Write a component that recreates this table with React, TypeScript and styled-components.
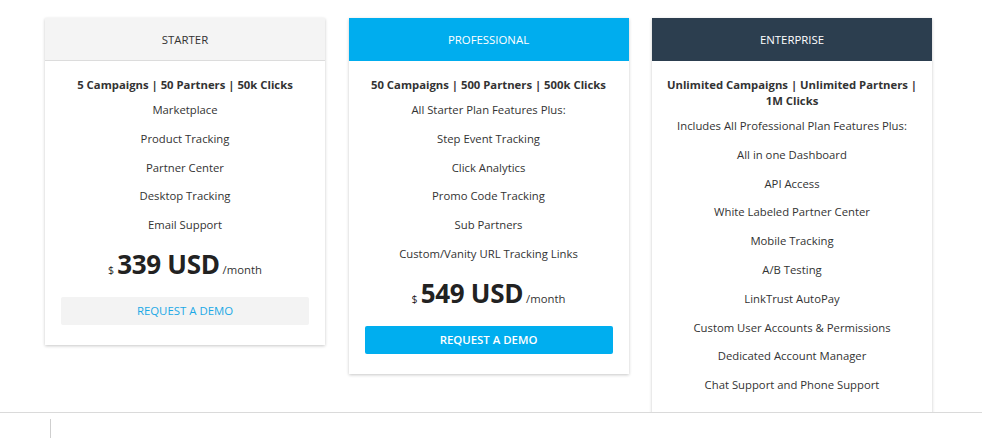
import React from "react";
import styled, { createGlobalStyle } from "styled-components";

const Global = createGlobalStyle`
  html, body { margin: 0; padding: 0; background: #fff; }
  body { font-family: "Open Sans", "Liberation Sans", sans-serif; color: #333; }
  * { box-sizing: border-box; }
`;

const Page = styled.div`
  display: flex;
  align-items: flex-start;
  gap: 23.5px;
  padding: 18px 0 0 45px;
  height: 438px;
  overflow: hidden;
`;

const Card = styled.div`
  width: 280px;
  background: #fff;
  box-shadow: 0 1px 3px rgba(0, 0, 0, 0.22);
  display: flex;
  flex-direction: column;
`;

const Header = styled.div<{ $bg: string; $fg: string; $line?: boolean }>`
  height: 43px;
  display: flex;
  align-items: center;
  justify-content: center;
  background: ${(p) => p.$bg};
  color: ${(p) => p.$fg};
  font-size: 11.4px;
  text-transform: uppercase;
  border-bottom: 1px solid ${(p) => (p.$line ? "#dcdcdc" : p.$bg)};
`;

const Body = styled.div<{ $tall?: boolean }>`
  padding: 16px 16px ${(p) => (p.$tall ? "40px" : "20px")};
  display: flex;
  flex-direction: column;
  align-items: center;
  text-align: center;
`;

const Limits = styled.div`
  font-size: 11.3px;
  font-weight: 700;
  line-height: 16px;
  color: #333;
  margin: 0 -6px 3px;
`;

const Feature = styled.div`
  font-size: 11.3px;
  line-height: 16.8px;
  padding: 6px 0;
  color: #333;
`;

const Price = styled.div`
  display: flex;
  align-items: baseline;
  justify-content: center;
  gap: 3px;
  margin: 8px 0 11px;
  color: #222;
  line-height: 32px;
`;

const Currency = styled.span`
  font-size: 10.5px;
`;

const Amount = styled.span`
  font-size: 26px;
  font-weight: 700;
  letter-spacing: -0.3px;
`;

const Period = styled.span`
  font-size: 11.3px;
  color: #333;
`;

const DemoButton = styled.button<{ $primary?: boolean }>`
  width: 100%;
  height: 28px;
  border: none;
  border-radius: 2px;
  font-family: inherit;
  font-size: 11.4px;
  text-transform: uppercase;
  cursor: pointer;
  background: ${(p) => (p.$primary ? "#00aeef" : "#f3f3f3")};
  color: ${(p) => (p.$primary ? "#fff" : "#1ba9e6")};
  font-weight: ${(p) => (p.$primary ? 600 : 400)};
`;

const Footer = styled.div`
  position: fixed;
  left: 0;
  right: 0;
  top: 412px;
  bottom: 0;
  background: #fff;
  border-top: 1px solid #dadada;
  padding: 6px 0 0 50px;
`;

const Divider = styled.div`
  width: 1px;
  height: 20px;
  background: #cfcfcf;
`;

type Plan = {
  name: string;
  bg: string;
  fg: string;
  line?: boolean;
  limits: string;
  features: string[];
  price?: string;
  primary?: boolean;
};

const plans: Plan[] = [
  {
    name: "Starter",
    bg: "#f4f4f4",
    fg: "#333",
    line: true,
    limits: "5 Campaigns | 50 Partners | 50k Clicks",
    features: ["Marketplace", "Product Tracking", "Partner Center", "Desktop Tracking", "Email Support"],
    price: "339 USD",
  },
  {
    name: "Professional",
    bg: "#00adee",
    fg: "#fff",
    limits: "50 Campaigns | 500 Partners | 500k Clicks",
    features: [
      "All Starter Plan Features Plus:",
      "Step Event Tracking",
      "Click Analytics",
      "Promo Code Tracking",
      "Sub Partners",
      "Custom/Vanity URL Tracking Links",
    ],
    price: "549 USD",
    primary: true,
  },
  {
    name: "Enterprise",
    bg: "#2c3e4f",
    fg: "#fff",
    limits: "Unlimited Campaigns | Unlimited Partners | 1M Clicks",
    features: [
      "Includes All Professional Plan Features Plus:",
      "All in one Dashboard",
      "API Access",
      "White Labeled Partner Center",
      "Mobile Tracking",
      "A/B Testing",
      "LinkTrust AutoPay",
      "Custom User Accounts & Permissions",
      "Dedicated Account Manager",
      "Chat Support and Phone Support",
    ],
  },
];

export default function App() {
  return (
    <>
      <Global />
      <Page>
        {plans.map((p) => (
          <Card key={p.name}>
            <Header $bg={p.bg} $fg={p.fg} $line={p.line}>
              {p.name}
            </Header>
            <Body $tall={!p.price}>
              <Limits>{p.limits}</Limits>
              {p.features.map((f) => (
                <Feature key={f}>{f}</Feature>
              ))}
              {p.price && (
                <>
                  <Price>
                    <Currency>$</Currency>
                    <Amount>{p.price}</Amount>
                    <Period>/month</Period>
                  </Price>
                  <DemoButton $primary={p.primary}>Request a Demo</DemoButton>
                </>
              )}
            </Body>
          </Card>
        ))}
      </Page>
      <Footer>
        <Divider />
      </Footer>
    </>
  );
}
